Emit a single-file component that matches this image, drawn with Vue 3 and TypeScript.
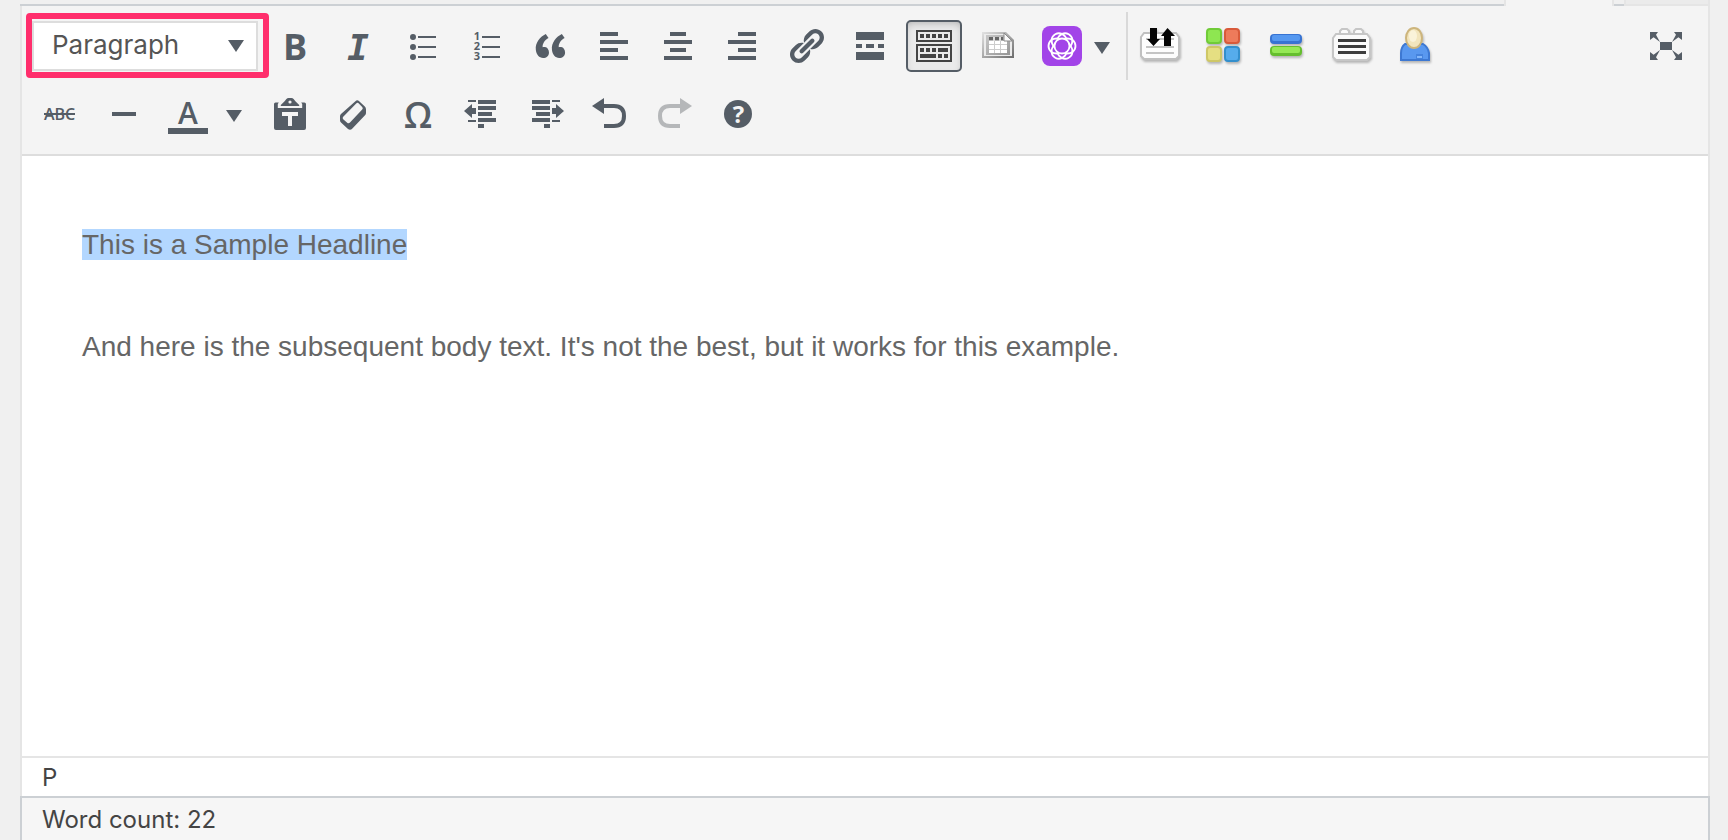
<script setup lang="ts">
import { ref } from 'vue'

interface Tool {
  id: string
  label: string
  disabled?: boolean
}

const format = ref('Paragraph')
const formats = ['Paragraph', 'Heading 1', 'Heading 2', 'Heading 3', 'Preformatted']
const toolbarToggled = ref(true)

const mainTools: Tool[] = [
  { id: 'bold', label: 'Bold' },
  { id: 'italic', label: 'Italic' },
  { id: 'ul', label: 'Bulleted list' },
  { id: 'ol', label: 'Numbered list' },
  { id: 'quote', label: 'Blockquote' },
  { id: 'left', label: 'Align left' },
  { id: 'center', label: 'Align center' },
  { id: 'right', label: 'Align right' },
  { id: 'link', label: 'Insert link' },
  { id: 'more', label: 'Insert Read More tag' },
]

const secondTools: Tool[] = [
  { id: 'paste', label: 'Paste as text' },
  { id: 'eraser', label: 'Clear formatting' },
  { id: 'omega', label: 'Special character' },
  { id: 'outdent', label: 'Decrease indent' },
  { id: 'indent', label: 'Increase indent' },
  { id: 'undo', label: 'Undo' },
  { id: 'redo', label: 'Redo', disabled: true },
  { id: 'help', label: 'Keyboard shortcuts' },
]

const paths: Record<string, string> = {
  ul: 'M5.5 4a1.5 1.5 0 1 1 0 3 1.5 1.5 0 0 1 0-3zM5.5 9a1.5 1.5 0 1 1 0 3 1.5 1.5 0 0 1 0-3zM5.5 14a1.5 1.5 0 1 1 0 3 1.5 1.5 0 0 1 0-3zM8 5h9v1H8zM8 10h9v1H8zM8 15h9v1H8z',
  ol: 'M8 5h9v1H8zM8 10h9v1H8zM8 15h9v1H8z',
  quote:
    'M9.49 13.22c0-.74-.2-1.38-.61-1.9-.62-.78-1.83-.88-2.53-.72-.29-1.65 1.11-3.75 2.92-4.65L7.88 4c-2.73 1.3-5.42 4.28-4.96 8.05C3.21 14.43 4.59 16 6.54 16c.85 0 1.56-.25 2.12-.75s.83-1.18.83-2.03zm8.05 0c0-.74-.2-1.38-.61-1.9-.63-.78-1.83-.88-2.53-.72-.29-1.65 1.11-3.75 2.92-4.65L15.93 4c-2.73 1.3-5.41 4.28-4.95 8.05.29 2.38 1.66 3.95 3.61 3.95.85 0 1.56-.25 2.12-.75s.83-1.18.83-2.03z',
  left: 'M3 3h9v2H3zM3 7h14v2H3zM3 11h9v2H3zM3 15h14v2H3z',
  center: 'M6 3h8v2H6zM3 7h14v2H3zM6 11h8v2H6zM3 15h14v2H3z',
  right: 'M8 3h9v2H8zM3 7h14v2H3zM8 11h9v2H8zM3 15h14v2H3z',
  link: 'M17.74 2.76c1.68 1.69 1.68 4.41 0 6.1l-1.53 1.52c-1.12 1.12-2.7 1.47-4.14 1.09l2.62-2.61.76-.77.76-.76c.84-.84.84-2.2 0-3.04-.84-.85-2.2-.85-3.04 0l-.77.76-3.38 3.38c-.37-1.44-.02-3.02 1.1-4.14l1.52-1.53c1.69-1.68 4.42-1.68 6.1 0zM8.59 13.43l5.34-5.34c.42-.42.42-1.1 0-1.52-.44-.43-1.13-.39-1.53 0l-5.33 5.34c-.42.42-.42 1.1 0 1.52.44.43 1.13.39 1.52 0zm-.76 2.29l4.14-4.15c.38 1.44.03 3.02-1.09 4.14l-1.52 1.53c-1.69 1.68-4.41 1.68-6.1 0-1.68-1.68-1.68-4.42 0-6.1l1.53-1.52c1.12-1.12 2.7-1.47 4.14-1.1l-4.14 4.15c-.85.84-.85 2.2 0 3.05.84.84 2.2.84 3.04 0z',
  more: 'M3 3h14v4H3zM3 9h3v2H3zM8 9h4v2H8zM14 9h3v2h-3zM3 13h14v4H3z',
  paste:
    'M7.3 3.6 8.2 2.500Q8.600 2 9.300 2h1.400q.7 0 1.100.5l.9 1.100L14.600 5.500V6H5.400v-.5zM10 3.200a.8.8 0 1 0 0 1.600.8.8 0 0 0 0-1.600zM2 5q0-.8.8-.8h1.600L3.900 5v2h12.200V5l-.5-.8h1.600q.8 0 .8.8v12q0 1-1 1H3q-1 0-1-1z',
  eraser:
    'M10.700 3.600q.9-.9 1.900 0l2.800 2.600q.6.6.6 1.400v1.900q0 .6-.5 1.100l-6.300 6.700q-1.100 1.100-2.200.2l-3.500-3.200q-.5-.5-.5-1.300v-1.900q0-.6.5-1.100zM11.100 4.700l-6.500 6.700q-.6.6 0 1.200l2 1.800q.7.6 1.400-.1l6.100-6.500q.6-.7 0-1.300l-1.700-1.800q-.6-.6-1.300 0z',
  outdent:
    'M3 3h4v1H3zM8 3h9v2H8zM8 6h9v2H8zM8 9h7v2H8zM8 12h9v2H8zM3 13h4v1H3zM8 15h3v2H8zM1 8.500 5 5v2h2v3H5v2z',
  indent:
    'M3 3h9v2H3zM13 3h4v1h-4zM3 6h9v2H3zM5 9h7v2H5zM3 12h9v2H3zM13 13h4v1h-4zM9 15h3v2H9zM19 8.500 15 5v2h-2v3h2v2z',
  undo: 'M1 6l6-4v3h5q6 0 6 6t-6 6H7v-2h5q4 0 4-4t-4-4H7v3z',
  redo: 'M19 6l-6-4v3H8q-6 0-6 6t6 6h5v-2H8q-4 0-4-4t4-4h5v3z',
}

const petals = [0, 60, 120, 180, 240, 300]
</script>

<template>
  <main class="page">
    <div class="tabs" aria-hidden="true">
      <span class="tabs-line"></span>
      <span class="tab-current"></span>
      <span class="tab-gap"></span>
      <span class="tab-other"></span>
    </div>

    <section class="editor">
      <div class="toolbar" role="toolbar" aria-label="Formatting">
        <div class="row">
          <div class="format">
            <select v-model="format" aria-label="Text format">
              <option v-for="f in formats" :key="f">{{ f }}</option>
            </select>
            <svg class="caret" viewBox="0 0 16 12"><path d="M0 0h16L8 12z" /></svg>
            <span class="highlight"></span>
          </div>

          <button v-for="t in mainTools" :key="t.id" type="button" class="tool" :aria-label="t.label">
            <svg class="icon" viewBox="0 0 20 20">
              <text v-if="t.id === 'bold'" class="glyph heavy" x="10.500" y="17" font-size="18">B</text>
              <text v-else-if="t.id === 'italic'" class="glyph slab" x="10" y="17" font-size="18">I</text>
              <template v-else>
                <path :d="paths[t.id]" />
                <g v-if="t.id === 'ol'" class="glyph heavy" font-size="5.500">
                  <text x="5.500" y="7">1</text>
                  <text x="5.500" y="12">2</text>
                  <text x="5.500" y="17">3</text>
                </g>
              </template>
            </svg>
          </button>

          <button
            type="button"
            class="tool"
            :class="{ active: toolbarToggled }"
            :aria-pressed="toolbarToggled"
            aria-label="Toolbar toggle"
            @click="toolbarToggled = !toolbarToggled"
          >
            <svg class="icon dark" viewBox="0 0 20 20">
              <path
                fill-rule="evenodd"
                d="M1 2h18v6H1zM2 3v4h16V3zM1 9h18v9H1zM2 10v7h16v-7zM3 4h2v2H3zM6 4h2v2H6zM9 4h2v2H9zM12 4h2v2h-2zM15 4h2v2h-2zM3 11h2v2H3zM6 11h2v2H6zM9 11h2v2H9zM12 11h5v2h-5zM3 14h8v2H3zM12 14h2v2h-2zM15 14h2v2h-2z"
              />
            </svg>
          </button>

          <button type="button" class="tool" aria-label="Insert table">
            <svg class="icon" viewBox="0 0 40 40">
              <defs>
                <linearGradient id="sheet" x1="0" y1="0" x2="1" y2="1">
                  <stop offset="0" stop-color="#e2e2e2" />
                  <stop offset="1" stop-color="#6c6c6c" />
                </linearGradient>
                <linearGradient id="frame" x1="0" y1="0" x2="1" y2="1">
                  <stop offset="0" stop-color="#c8c8c8" />
                  <stop offset="1" stop-color="#959595" />
                </linearGradient>
              </defs>
              <path d="M4 6h24l8 8v18H4z" fill="url(#sheet)" />
              <path d="M6 8h21l7 7v15H6z" fill="#ececec" />
              <path d="M8 9h18l6 6v14H8z" fill="url(#frame)" />
              <path d="M11 15h18v12H11z" fill="#fff" />
              <path d="M11 11h14v3H11z" fill="#666" />
              <path d="M15 11h2v4h-2zM21 11h2v4h-2z" fill="#ddd" />
              <path d="M11 18h18v1H11zM11 23h18v1H11zM16 15h1v12h-1zM22 15h1v12h-1z" fill="#ccc" />
              <path d="M26 7v8h8z" fill="#fafafa" stroke="#8c8c8c" />
            </svg>
          </button>

          <div class="split">
            <button type="button" class="split-main" aria-label="Insert opt-in form">
              <svg class="icon" viewBox="0 0 40 40">
                <rect width="40" height="40" rx="8" fill="#a244e8" />
                <g fill="none" stroke="#fff" stroke-width="1.800">
                  <circle cx="20" cy="20" r="7.500" />
                  <path
                    v-for="p in petals"
                    :key="p"
                    :transform="`rotate(${p} 20 20)`"
                    d="M23 12.800C29 11.500 33.500 15 33.500 20s-4.500 8.500-10.500 7.200"
                  />
                </g>
              </svg>
            </button>
            <button type="button" class="drop" aria-label="Form options">
              <svg class="caret" viewBox="0 0 16 12"><path d="M0 0h16L8 12z" /></svg>
            </button>
          </div>

          <div class="group">
            <button type="button" class="tool" aria-label="Import and export">
              <svg class="icon soft" viewBox="0 0 40 40">
                <path d="M4 7h32l3 4v19l-3 3H4l-3-3V11z" fill="#fdfdfd" stroke="#c0c0c0" stroke-width="2" />
                <path d="M6 12h28v2H6zM6 20h28v2H6zM6 26h28v2H6z" fill="#c4c4c4" />
                <path d="M10 2h7v11h3l-6.500 7L7 13h3zM24 20h7V10h4l-7.500-8L21 10h3z" fill="#050505" />
              </svg>
            </button>
            <button type="button" class="tool" aria-label="Layout blocks">
              <svg class="icon soft" viewBox="0 0 40 40">
                <g stroke-width="2">
                  <rect x="3" y="3" width="14" height="14" rx="3" fill="#8ee651" stroke="#70cb38" />
                  <rect x="21" y="3" width="14" height="14" rx="3" fill="#ee7b5b" stroke="#d85a3a" />
                  <rect x="3" y="21" width="14" height="14" rx="3" fill="#e5df82" stroke="#cec766" />
                  <rect x="21" y="21" width="14" height="14" rx="3" fill="#56acec" stroke="#338fcd" />
                </g>
              </svg>
            </button>
            <button type="button" class="tool" aria-label="Dividers">
              <svg class="icon soft" viewBox="0 0 40 40">
                <rect x="2" y="8" width="32" height="10" rx="4" fill="#3773d2" />
                <rect x="4" y="9" width="28" height="6" rx="2" fill="#5598f0" />
                <rect x="2" y="20" width="32" height="10" rx="4" fill="#65be2e" />
                <rect x="4" y="21" width="28" height="6" rx="2" fill="#95e955" />
              </svg>
            </button>
            <button type="button" class="tool" aria-label="Content tabs">
              <svg class="icon soft" viewBox="0 0 40 40">
                <g fill="#fafafa" stroke="#c6c6c6" stroke-width="2">
                  <path d="M8 9V5l2-2h5l2 2v4M22 9V5l2-2h5l2 2v4" />
                  <path d="M4 8h31l3 4v19l-3 3H4l-3-3V12z" />
                </g>
                <path d="M6 13h28v3H6zM6 19h28v3H6zM6 25h28v3H6z" fill="#3c3c3c" />
              </svg>
            </button>
            <button type="button" class="tool" aria-label="Author box">
              <svg class="icon soft" viewBox="0 0 40 40">
                <path d="M9 18h18q5 3 6 9v7H5v-7q0-6 4-9z" fill="#5998ef" stroke="#3d78d2" stroke-width="2" />
                <path d="M20 28h7v5h-7z" fill="#4583dd" />
                <path d="M21 30h5v2h-5z" fill="#85b8fb" />
                <ellipse cx="18" cy="12" rx="8" ry="10" fill="#f2e5bd" stroke="#cdb57c" stroke-width="2" />
                <ellipse cx="17" cy="10" rx="4" ry="6" fill="#faf3da" />
              </svg>
            </button>
          </div>

          <button type="button" class="tool last" aria-label="Fullscreen">
            <svg class="icon" viewBox="0 0 20 20">
              <path
                d="M7 8h6v4H7zM2 3h4L5 4.400 7 8 3.800 5.600 2 7zM18 3h-4l1 1.400L13 8l3.200-2.400L18 7zM2 17h4l-1-1.400L7 12l-3.200 2.400L2 13zM18 17h-4l1-1.400-2-3.600 3.200 2.400L18 13z"
              />
            </svg>
          </button>
        </div>

        <div class="row">
          <button type="button" class="tool" aria-label="Strikethrough">
            <svg class="icon" viewBox="0 0 20 20">
              <text class="glyph" x="9.800" y="13" font-size="8">ABC</text>
              <path d="M2 9.500h15.500v1H2z" />
            </svg>
          </button>
          <button type="button" class="tool" aria-label="Horizontal line">
            <svg class="icon" viewBox="0 0 20 20"><path d="M4 9h12v2H4z" /></svg>
          </button>
          <div class="split spaced">
            <button type="button" class="split-main" aria-label="Text color">
              <svg class="icon" viewBox="0 0 20 20">
                <text class="glyph" x="10" y="15" font-size="15">A</text>
                <path d="M0 17h20v3H0z" />
              </svg>
            </button>
            <button type="button" class="drop" aria-label="Choose text color">
              <svg class="caret" viewBox="0 0 16 12"><path d="M0 0h16L8 12z" /></svg>
            </button>
          </div>
          <button
            v-for="t in secondTools"
            :key="t.id"
            type="button"
            class="tool"
            :disabled="t.disabled"
            :aria-label="t.label"
          >
            <svg class="icon" viewBox="0 0 20 20">
              <text v-if="t.id === 'omega'" class="glyph" x="10" y="17" font-size="18">Ω</text>
              <template v-else-if="t.id === 'help'">
                <circle cx="10" cy="10" r="7" />
                <text class="glyph heavy light" x="10.200" y="14.500" font-size="12">?</text>
              </template>
              <template v-else>
                <path fill-rule="evenodd" :d="paths[t.id]" />
                <path v-if="t.id === 'paste'" class="light" d="M6 9h8v2h-3v5H9v-5H6z" />
              </template>
            </svg>
          </button>
        </div>
      </div>

      <div class="content" contenteditable="true" spellcheck="false" role="textbox" aria-label="Post content">
        <p><span class="selected">This is a Sample Headline</span></p>
        <p>And here is the subsequent body text. It's not the best, but it works for this example.</p>
      </div>

      <div class="path">P</div>
    </section>
    <footer class="status">Word count: 22</footer>
  </main>
</template>

<style>
body {
  margin: 0;
  background: #f0f0f0;
}
</style>

<style scoped>
* {
  box-sizing: border-box;
}

.page {
  display: flex;
  flex-direction: column;
  min-height: 100vh;
  padding: 0 18px 0 20px;
  color: #444;
  font: 24px/36px Inter, Roboto, sans-serif;
}

.tabs {
  display: flex;
  height: 6px;
}

.tabs-line {
  flex: 1;
  border-bottom: 2px solid #ccd0d4;
}

.tab-current {
  width: 110px;
  border: solid #e5e5e5;
  border-width: 0 2px;
  background: #f4f4f4;
}

.tab-gap {
  width: 10px;
  border-bottom: 2px solid #ccd0d4;
}

.tab-other {
  width: 86px;
  border: solid #e5e5e5;
  border-width: 0 2px 2px;
  background: #ebebeb;
}

.editor {
  display: flex;
  flex: 1;
  flex-direction: column;
  border: solid #e5e5e5;
  border-width: 0 2px;
  background: #fff;
}

.toolbar {
  padding: 6px 10px 6px 6px;
  border-bottom: 2px solid #ddd;
  background: #f4f4f4;
}

.row {
  display: flex;
  align-items: center;
  height: 68px;
}

button {
  display: flex;
  flex: none;
  align-items: center;
  justify-content: center;
  padding: 0;
  border: 0;
  background: none;
  color: #555d66;
}

.tool {
  width: 56px;
  height: 52px;
  margin: 0 4px;
  border: 2px solid transparent;
  border-radius: 5px;
}

.tool.active {
  border-color: #555d66;
  background: #ebebeb;
  box-shadow: inset 0 4px 10px -4px rgba(0, 0, 0, 0.3);
}

.tool:disabled {
  color: #b5b7b9;
}

.tool.last {
  margin-left: auto;
}

.icon {
  display: block;
  flex: none;
  overflow: visible;
  width: 40px;
  height: 40px;
  fill: currentColor;
}

.icon.dark {
  color: #444;
}

.icon.soft {
  filter: drop-shadow(1px 2px 1px rgba(0, 0, 0, 0.25));
}

.glyph {
  font-family: 'Open Sans', 'Noto Sans', sans-serif;
  font-weight: 600;
  text-anchor: middle;
}

.heavy {
  font-weight: 700;
}

.slab {
  font-family: 'DejaVu Sans Mono', monospace;
  font-weight: 700;
  font-style: italic;
}

.light {
  fill: #f4f4f4;
}

.caret {
  width: 16px;
  height: 12px;
  fill: #555d66;
}

.format {
  position: relative;
  width: 226px;
  margin: 0 4px;
}

.format select {
  display: block;
  width: 100%;
  height: 50px;
  padding: 0 40px 2px 18px;
  border: 2px solid #ddd;
  border-radius: 0;
  appearance: none;
  background: #fff;
  color: #555;
  font: 26px/32px Inter, Roboto, sans-serif;
}

.format .caret {
  position: absolute;
  top: 19px;
  right: 14px;
  pointer-events: none;
}

.highlight {
  position: absolute;
  inset: -8px -11px -7px -6px;
  border: 6px solid #ff2e6c;
  border-radius: 4px;
  pointer-events: none;
}

.split {
  display: flex;
  align-items: center;
  margin: 0 4px 0 12px;
}

.split-main {
  width: 40px;
  height: 52px;
}

.drop {
  width: 40px;
  height: 52px;
  padding-top: 4px;
}

.spaced {
  gap: 6px;
}

.group {
  display: flex;
  align-items: center;
  height: 68px;
  border-left: 2px solid #d9d9d9;
}

.content {
  flex: 1;
  padding: 65px 60px 0;
  outline: 0;
  color: #666;
  font: 28px/48px 'Liberation Sans', Arial, sans-serif;
}

.content p {
  margin: 0 0 54px;
}

.selected {
  background: #b3d7ff;
}

.path {
  padding: 2px 20px 0;
  border-top: 2px solid #e5e5e5;
}

.status {
  height: 44px;
  padding: 4px 20px 0;
  border: solid #ccd0d4;
  border-width: 2px 2px 0;
  background: #f6f6f6;
}
</style>
